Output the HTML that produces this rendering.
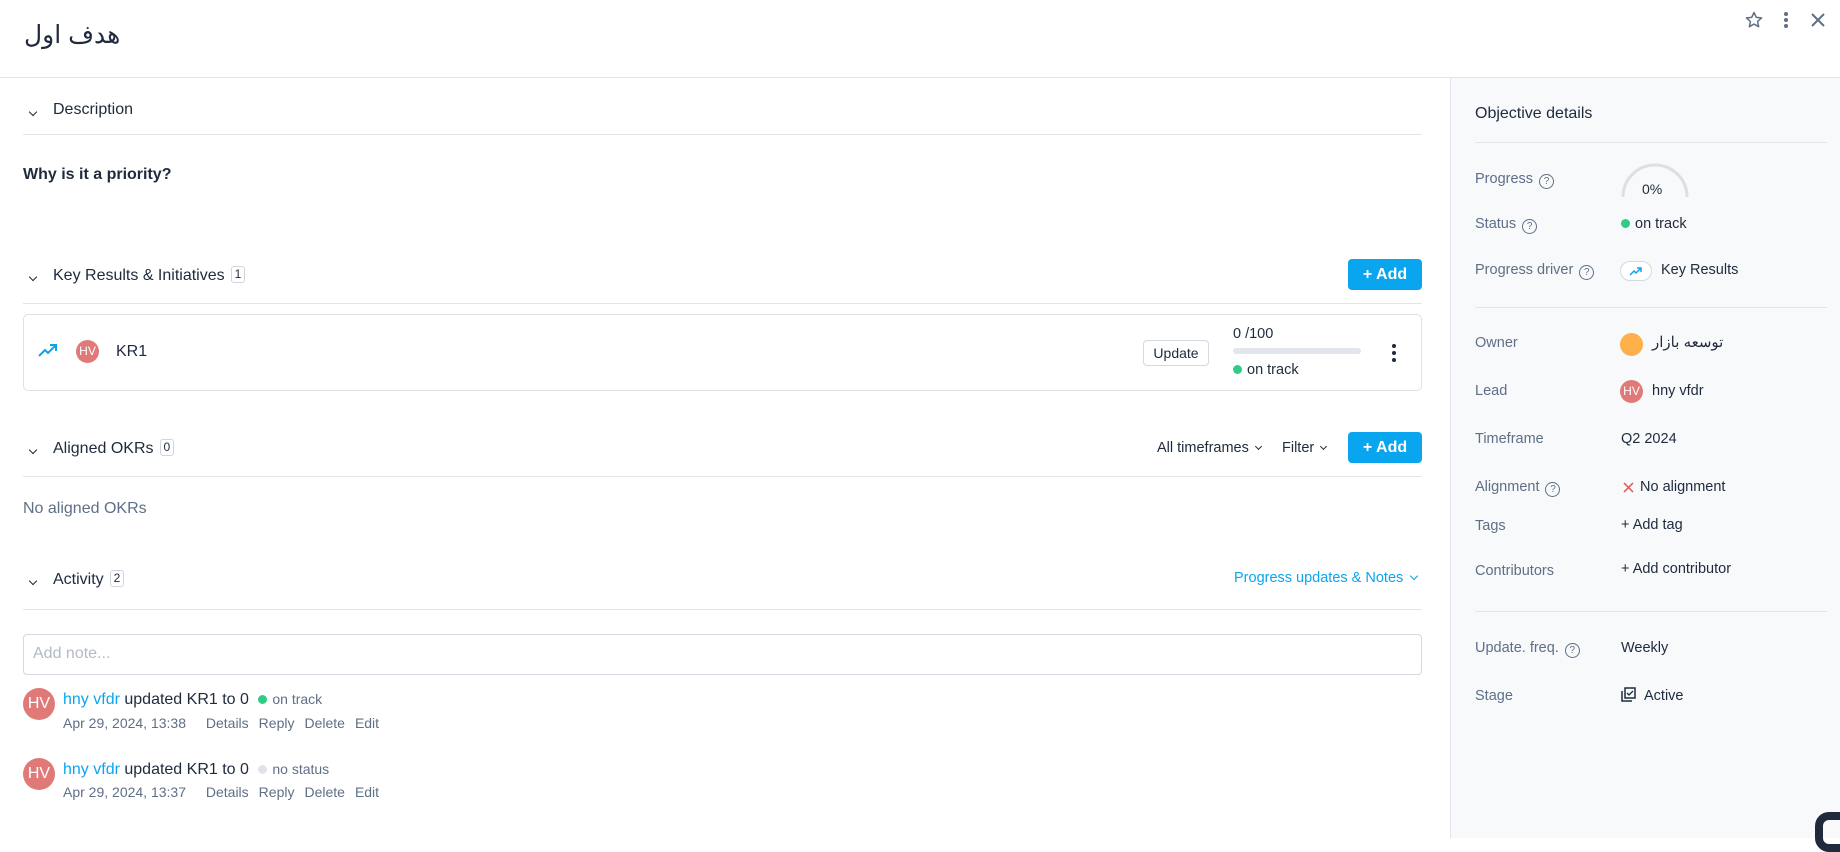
<!DOCTYPE html>
<html><head><meta charset="utf-8"><style>
*{box-sizing:border-box;margin:0;padding:0}
body{width:1840px;height:838px;overflow:hidden;background:#fff;font-family:"Liberation Sans","Noto Sans CJK SC",sans-serif;color:#1f2a3c;font-size:15px;position:relative}
.a{position:absolute;white-space:nowrap}
.line{position:absolute;height:1px;background:#e2e6ec}
.chev{display:inline-block;width:6px;height:6px;border-right:1.6px solid #1f2a3c;border-bottom:1.6px solid #1f2a3c;transform:rotate(45deg)}
.badge{display:inline-block;border:1px solid #cfd5dd;border-radius:3px;font-size:12px;padding:0 3px;line-height:15px;margin-left:6px;vertical-align:2px}
.btn{position:absolute;background:#0aa5ef;color:#fff;font-weight:bold;border-radius:4px;font-size:16px;text-align:center;line-height:31px}
.lbl{position:absolute;left:1475px;color:#5f6f86;font-size:14.5px;white-space:nowrap}
.val{position:absolute;left:1621px;font-size:14.5px;white-space:nowrap}
.q{display:inline-block;width:15px;height:15px;border:1.3px solid #5f6f86;border-radius:50%;font-size:10px;text-align:center;line-height:13px;margin-left:6px;vertical-align:-1px}
.av{position:absolute;border-radius:50%;background:#e07a78;color:#fff;text-align:center;font-size:13px}
.dot{display:inline-block;width:9px;height:9px;border-radius:50%;background:#2ecc84;margin-right:5px}
.meta{color:#5f6f86;font-size:14px}
.meta span{margin-left:10px}
</style></head><body>
<div class="a" style="left:24px;top:20px;font-size:25px">هدف اول</div>
<svg class="a" style="left:1744px;top:10px" width="20" height="20" viewBox="0 0 24 24"><path d="M12 3l2.7 5.8 6.3.7-4.7 4.3 1.3 6.2L12 16.9 6.4 20l1.3-6.2L3 9.5l6.3-.7z" fill="none" stroke="#5f6f86" stroke-width="1.8" stroke-linejoin="round"/></svg>
<svg class="a" style="left:1779px;top:10px" width="14" height="20"><circle cx="7" cy="4" r="2" fill="#5f6f86"/><circle cx="7" cy="10" r="2" fill="#5f6f86"/><circle cx="7" cy="16" r="2" fill="#5f6f86"/></svg>
<svg class="a" style="left:1810px;top:12px" width="16" height="16"><path d="M2 2l12 12M14 2L2 14" stroke="#5f6f86" stroke-width="2"/></svg>
<div class="line" style="left:0;top:77px;width:1840px"></div>
<div class="a" style="left:1450px;top:78px;width:390px;height:760px;background:#f7f9fb;border-left:1px solid #e2e6ec"></div>

<div class="a" style="left:30px;top:102px"><span class="chev"></span></div>
<div class="a" style="left:53px;top:101px;font-size:16px">Description</div>
<div class="line" style="left:23px;top:134px;width:1399px"></div>
<div class="a" style="left:23px;top:166px;font-size:16px;font-weight:bold">Why is it a priority?</div>

<div class="a" style="left:30px;top:267px"><span class="chev"></span></div>
<div class="a" style="left:53px;top:266px;font-size:16px">Key Results &amp; Initiatives<span class="badge">1</span></div>
<div class="btn" style="left:1348px;top:259px;width:74px">+ Add</div>
<div class="line" style="left:23px;top:303px;width:1399px"></div>
<div class="a" style="left:23px;top:314px;width:1399px;height:77px;border:1px solid #dde2e8;border-radius:5px"></div>
<svg class="a" style="left:38px;top:343px" width="20" height="14"><path d="M1 13l6-6 3 3 7-7M12 2h6v6" fill="none" stroke="#0aa5ef" stroke-width="2"/></svg>
<div class="av" style="left:76px;top:340px;width:23px;height:23px;line-height:23px;font-size:12px">HV</div>
<div class="a" style="left:116px;top:343px;font-size:16px">KR1</div>
<div class="a" style="left:1143px;top:340px;width:66px;height:26px;border:1px solid #d3d9e0;border-radius:4px;text-align:center;line-height:24px;font-size:14px">Update</div>
<div class="a" style="left:1233px;top:326px;font-size:14.5px">0 /100</div>
<div class="a" style="left:1233px;top:348px;width:128px;height:6px;border-radius:3px;background:#e2e6ec"></div>
<div class="a" style="left:1233px;top:362px;font-size:14.5px"><span class="dot"></span>on track</div>
<svg class="a" style="left:1390px;top:343px" width="8" height="20"><circle cx="4" cy="3" r="2" fill="#1f2a3c"/><circle cx="4" cy="10" r="2" fill="#1f2a3c"/><circle cx="4" cy="17" r="2" fill="#1f2a3c"/></svg>

<div class="a" style="left:30px;top:440px"><span class="chev"></span></div>
<div class="a" style="left:53px;top:439px;font-size:16px">Aligned OKRs<span class="badge">0</span></div>
<div class="a" style="left:1157px;top:440px;font-size:14.5px">All timeframes <span class="chev" style="width:5px;height:5px;vertical-align:3px;margin-left:3px"></span></div>
<div class="a" style="left:1282px;top:440px;font-size:14.5px">Filter <span class="chev" style="width:5px;height:5px;vertical-align:3px;margin-left:3px"></span></div>
<div class="btn" style="left:1348px;top:432px;width:74px">+ Add</div>
<div class="line" style="left:23px;top:476px;width:1399px"></div>
<div class="a" style="left:23px;top:500px;font-size:16px;color:#5f6f86">No aligned OKRs</div>

<div class="a" style="left:30px;top:571px"><span class="chev"></span></div>
<div class="a" style="left:53px;top:570px;font-size:16px">Activity<span class="badge">2</span></div>
<div class="a" style="left:1234px;top:570px;font-size:14.5px;color:#0aa5ef">Progress updates &amp; Notes <span class="chev" style="border-color:#0aa5ef;vertical-align:3px;margin-left:4px"></span></div>
<div class="line" style="left:23px;top:609px;width:1399px"></div>
<div class="a" style="left:23px;top:634px;width:1399px;height:41px;border:1px solid #d3d9e0;border-radius:4px;padding:10px 9px;color:#b3bac4;font-size:16px">Add note...</div>

<div class="av" style="left:23px;top:688px;width:32px;height:32px;line-height:32px;font-size:16px">HV</div>
<div class="a" style="left:63px;top:691px;font-size:16px"><span style="color:#0aa5ef">hny vfdr</span> updated KR1 to 0 <span class="dot" style="margin-left:5px"></span><span style="font-size:14px;color:#5f6f86">on track</span></div>
<div class="a meta" style="left:63px;top:715px">Apr 29, 2024, 13:38 <span style="margin-left:16px">Details</span><span>Reply</span><span>Delete</span><span>Edit</span></div>

<div class="av" style="left:23px;top:758px;width:32px;height:32px;line-height:32px;font-size:16px">HV</div>
<div class="a" style="left:63px;top:761px;font-size:16px"><span style="color:#0aa5ef">hny vfdr</span> updated KR1 to 0 <span class="dot" style="margin-left:5px;background:#dfe3e8"></span><span style="font-size:14px;color:#5f6f86">no status</span></div>
<div class="a meta" style="left:63px;top:784px">Apr 29, 2024, 13:37 <span style="margin-left:16px">Details</span><span>Reply</span><span>Delete</span><span>Edit</span></div>

<div class="a" style="left:1475px;top:105px;font-size:16px">Objective details</div>
<div class="line" style="left:1475px;top:142px;width:352px"></div>
<div class="lbl" style="top:171px">Progress<span class="q">?</span></div>
<svg class="a" style="left:1620px;top:163px" width="70" height="36"><path d="M3 34A32 32 0 0 1 67 34" fill="none" stroke="#dcdfe3" stroke-width="3"/></svg>
<div class="val" style="left:1642px;top:181px;font-size:14px">0%</div>
<div class="lbl" style="top:216px">Status<span class="q">?</span></div>
<div class="val" style="top:216px"><span class="dot"></span>on track</div>
<div class="lbl" style="top:262px">Progress driver<span class="q">?</span></div>
<div class="a" style="left:1620px;top:261px;width:32px;height:20px;border:1px solid #d3d9e0;border-radius:10px;background:#fff"></div>
<svg class="a" style="left:1629px;top:265px" width="14" height="12"><path d="M1 10l4-4 2 2 5-5M8 3h4v4" fill="none" stroke="#0aa5ef" stroke-width="1.5"/></svg>
<div class="val" style="left:1661px;top:262px">Key Results</div>
<div class="line" style="left:1475px;top:307px;width:352px"></div>
<div class="lbl" style="top:335px">Owner</div>
<div class="a" style="left:1620px;top:333px;width:23px;height:23px;border-radius:50%;background:#fdb14d"></div>
<div class="val" style="left:1652px;top:333px;font-size:15px">توسعه بازار</div>
<div class="lbl" style="top:383px">Lead</div>
<div class="av" style="left:1620px;top:380px;width:23px;height:23px;line-height:23px;font-size:12px">HV</div>
<div class="val" style="left:1652px;top:383px">hny vfdr</div>
<div class="lbl" style="top:431px">Timeframe</div>
<div class="val" style="top:431px">Q2 2024</div>
<div class="lbl" style="top:479px">Alignment<span class="q">?</span></div>
<svg class="a" style="left:1623px;top:482px" width="11" height="11"><path d="M1 1l9 9M10 1L1 10" stroke="#e5534b" stroke-width="1.5"/></svg>
<div class="val" style="left:1640px;top:479px">No alignment</div>
<div class="lbl" style="top:518px">Tags</div>
<div class="val" style="top:517px">+ Add tag</div>
<div class="lbl" style="top:563px">Contributors</div>
<div class="val" style="top:561px">+ Add contributor</div>
<div class="line" style="left:1475px;top:611px;width:352px"></div>
<div class="lbl" style="top:640px">Update. freq.<span class="q">?</span></div>
<div class="val" style="top:640px">Weekly</div>
<div class="lbl" style="top:688px">Stage</div>
<svg class="a" style="left:1621px;top:687px" width="15" height="15"><rect x="4" y="1" width="10" height="10" fill="none" stroke="#1f2a3c" stroke-width="1.5"/><path d="M1 4v10h10" fill="none" stroke="#1f2a3c" stroke-width="1.5"/><path d="M6 6l2 2 4-4" fill="none" stroke="#1f2a3c" stroke-width="1.3"/></svg>
<div class="val" style="left:1644px;top:688px">Active</div>
<div class="a" style="left:1815px;top:812px;width:40px;height:40px;border-radius:14px;border:8px solid #1f2a3c"></div>
</body></html>
